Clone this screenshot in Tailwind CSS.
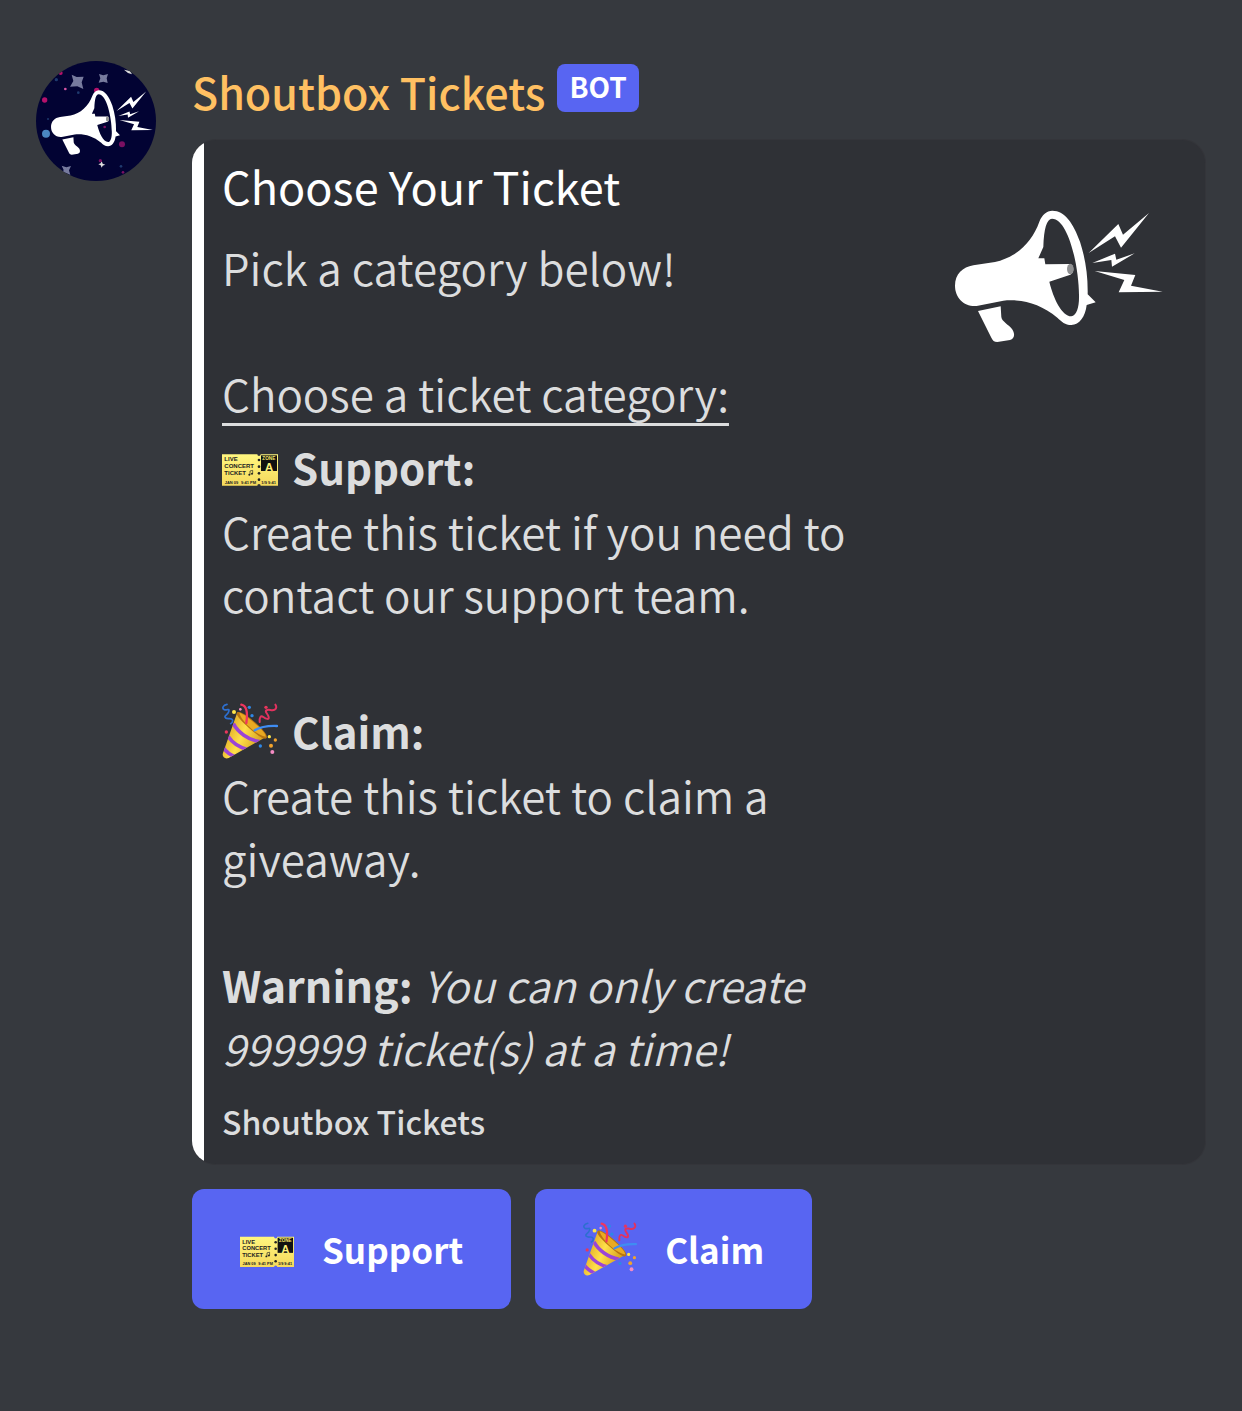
<!DOCTYPE html>
<html lang="en">
<head>
<meta charset="utf-8">
<title>Shoutbox Tickets</title>
<script src="https://cdn.jsdelivr.net/npm/@tailwindcss/browser@4"></script>
</head>
<body class="min-h-screen bg-[#36393e] font-['Noto_Sans_CJK_SC','Noto_Sans',sans-serif] text-[#dcddde]">
<svg class="absolute size-0" aria-hidden="true">
  <defs>
    <symbol id="megaphone" viewBox="0 -114 720 720">
      <path fill="#fff" fill-rule="evenodd" d="M45 272C45 238 68 216 100 211L165 201C225 188 275 145 298 80C306 60 320 47 337 47C375 47 400 85 420 140C436 190 444 240 443 298L467 322L440 330C436 365 418 390 394 390C375 390 365 380 352 368C300 325 245 312 190 317L110 333C72 336 45 308 45 272ZM336 71C320 72 312 100 310 156L295 190L313 190L316 208L390 207C403 210 403 234 391 239L328 260C340 310 365 363 394 364C410 362 418 335 417 300C416 210 385 72 336 71Z"/>
      <ellipse cx="391" cy="222" rx="10" ry="16" fill="#8f9092"/>
      <path fill="#fff" d="M114 348L182 334L184 366C186 380 205 388 216 402C226 416 224 432 210 435L172 441C162 441 158 436 154 428ZM446 174L535 87L549 119L627 54L543 158L525 124ZM457 204L525 176L529 194L584 175L516 215L514 195ZM464 228L586 240L573 272L668 290L536 292L553 255Z"/>
    </symbol>
    <linearGradient id="paper" x1="0" y1="0" x2="0" y2="1"><stop offset="0" stop-color="#fff67f"/><stop offset="1" stop-color="#f5d95c"/></linearGradient>
    <linearGradient id="gold" x1="0" y1="0.3" x2="1" y2="0.8"><stop offset="0" stop-color="#d99a1c"/><stop offset="0.45" stop-color="#ffe04a"/><stop offset="1" stop-color="#c98a10"/></linearGradient>
    <clipPath id="cone"><path d="M46 28L128 104L20 165C8 170 -1 160 3 150Z"/></clipPath>
    <symbol id="ticket" viewBox="0 -46 168 168">
      <path fill="url(#paper)" d="M0 0H106A5 5 0 0 0 116 0H168V94H116A5 5 0 0 0 106 94H0Z"/>
      <g fill="#222"><circle cx="111" cy="17" r="4"/><circle cx="111" cy="37" r="4"/><circle cx="111" cy="57" r="4"/><circle cx="111" cy="76" r="4"/></g>
      <path fill="#111" d="M117 3H165V50H117Z"/>
      <g font-family="Liberation Sans, sans-serif" font-weight="bold" fill="#222">
        <text x="7" y="21" font-size="18">LIVE</text>
        <text x="7" y="42" font-size="18">CONCERT</text>
        <text x="7" y="63" font-size="18">TICKET</text>
        <text x="8" y="88" font-size="12">JAN 09</text>
        <text x="57" y="88" font-size="12">9:41 PM</text>
        <text x="118" y="88" font-size="12">1/9 9:41</text>
        <text x="121" y="17" font-size="14" fill="#f8e86a">ZONE</text>
        <text x="129" y="49" font-size="34" fill="#fff27a">A</text>
      </g>
      <path d="M84 61V50L92 48V58" fill="none" stroke="#222" stroke-width="2"/><circle cx="82" cy="61" r="3" fill="#222"/><circle cx="90" cy="58" r="3" fill="#222"/>
    </symbol>
    <symbol id="popper" viewBox="0 0 168 168">
      <path fill="url(#gold)" d="M46 28L128 104L20 165C8 170 -1 160 3 150Z"/>
      <g clip-path="url(#cone)" fill="none" stroke="#9b45d6" stroke-width="11">
        <path d="M34 62C48 88 78 110 112 116"/><path d="M18 100C30 118 52 134 78 140"/><path d="M4 134C12 146 26 156 42 162"/>
      </g>
      <path fill="#b87410" d="M46 28C54 22 80 40 104 62C126 82 140 100 133 106C126 112 102 94 80 74C58 54 38 34 46 28Z"/>
      <path fill="#e9aa22" d="M52 29C64 32 84 48 104 66C122 82 132 94 131 101C116 98 96 86 80 70C66 56 54 40 52 29Z"/>
      <g fill="none" stroke-width="7" stroke-linecap="round">
        <path stroke="#f0355f" d="M58 5C74 8 78 26 73 60"/>
        <path stroke="#3f8df2" d="M98 82C118 70 140 68 165 69"/>
        <path stroke="#e2325f" stroke-width="6" d="M113 57C112 42 116 37 124 42C132 48 142 51 140 42C138 32 127 27 133 22C140 17 150 25 158 20C164 16 164 10 160 5"/>
        <path stroke="#2d6fd0" stroke-width="5" d="M15 4C3 6 -1 16 7 20C15 23 24 14 20 26C17 36 4 38 11 45C17 50 28 43 31 50C33 55 30 60 26 62"/>
      </g>
      <g fill="#2f87e6"><circle cx="82" cy="13" r="5"/><circle cx="90" cy="38" r="5"/><circle cx="115" cy="129" r="5"/></g>
      <g fill="#ffe648"><circle cx="36" cy="27" r="6"/><circle cx="142" cy="101" r="5"/></g>
      <g fill="#f2a32c"><circle cx="160" cy="111" r="5"/><circle cx="147" cy="128" r="6"/></g>
      <g fill="#e8365c"><circle cx="132" cy="13" r="5"/><circle cx="13" cy="87" r="5"/></g>
      <g fill="#f58cc4"><circle cx="151" cy="147" r="6"/><circle cx="55" cy="19" r="4"/></g>
    </symbol>
  </defs>
</svg>

<main class="flex items-start gap-9 px-9 py-[61px]">
  <svg class="size-[120px] shrink-0" viewBox="30 32 360 360" role="img" aria-label="Shoutbox Tickets avatar">
    <clipPath id="disc"><circle cx="210" cy="212" r="180"/></clipPath>
    <g clip-path="url(#disc)">
      <path fill="#020333" d="M30 32H390V392H30Z"/>
      <g fill="#777b9e"><path d="M137 73L152 80L173 79L167 96L172 116L154 108L132 109L142 92Z"/><path d="M219 71L232 75L246 71L242 84L245 98L232 94L218 97L223 84Z"/><path d="M107 346L121 351L135 347L129 360L133 374L120 368L107 372L113 359Z"/></g>
      <path fill="#ddd" d="M227 332L230 340L238 343L230 346L227 352L224 345L217 342L224 339ZM294 58L312 62L318 72L306 68Z"/>
      <g fill="#b5116b"><circle cx="56" cy="149" r="8"/><circle cx="212" cy="120" r="8"/><circle cx="104" cy="68" r="6"/></g>
      <g fill="#7a1062"><circle cx="288" cy="282" r="9"/><circle cx="236" cy="230" r="4"/><circle cx="223" cy="331" r="5"/><circle cx="291" cy="366" r="4"/></g>
      <circle cx="118" cy="116" r="4" fill="#d756a5"/><circle cx="60" cy="250" r="12" fill="#4a86c2"/>
      <g fill="#1e3a6e"><circle cx="91" cy="88" r="5"/><circle cx="157" cy="127" r="4"/><circle cx="285" cy="348" r="4"/><circle cx="66" cy="206" r="3"/></g>
      <use href="#megaphone" x="53" y="41" width="353" height="353"/>
    </g>
  </svg>

  <div class="min-w-0 flex-1">
    <header class="flex h-[78px] items-start gap-3">
      <h1 class="text-[43px] leading-[60px] font-medium text-[#ffc062]">Shoutbox Tickets</h1>
      <span class="mt-[3px] rounded-lg bg-[#5865f2] px-3 pb-1 text-[28px] leading-[44px] font-bold text-white">BOT</span>
    </header>

    <article class="flex overflow-hidden rounded-3xl border border-l-0 border-[#34353a] bg-[#2f3136]">
      <div class="w-3 shrink-0 bg-white"></div>
      <div class="flex min-w-0 flex-1 gap-6 pt-[17px] pr-[25px] pb-[19px] pl-[18px]">
        <div class="min-w-0 flex-1">
          <h2 class="mb-[21px] text-[45px] leading-[58px] font-normal text-white">Choose Your Ticket</h2>
          <div class="text-[44px] leading-[63px] font-[350]">
            <p>Pick a category below!</p>
            <p class="mt-[63px] underline decoration-3 underline-offset-[11px] [text-decoration-skip-ink:none]">Choose a ticket category:</p>
            <h3 class="flex items-center gap-3.5 pt-2.5 pb-0.5 text-[42px] font-bold"><svg class="size-14"><use href="#ticket"/></svg>Support:</h3>
            <p>Create this ticket if you need to contact our support team.</p>
            <h3 class="mt-[63px] flex items-center gap-3.5 pt-2.5 pb-0.5 text-[42px] font-bold"><svg class="size-14"><use href="#popper"/></svg>Claim:</h3>
            <p>Create this ticket to claim a giveaway.</p>
            <p class="mt-[63px]"><strong class="text-[43px] font-bold">Warning:</strong> <em class="text-[43px]">You can only create 999999 ticket(s) at a time!</em></p>
          </div>
          <p class="mt-[18px] text-[32px] leading-[48px] font-medium">Shoutbox Tickets</p>
        </div>
        <svg class="size-60 shrink-0" role="img" aria-label="Megaphone"><use href="#megaphone"/></svg>
      </div>
    </article>

    <div class="mt-6 flex gap-6">
      <button class="flex h-[120px] items-center gap-7 rounded-xl bg-[#5865f2] px-12 text-[35px] font-bold text-white"><svg class="size-[54px]"><use href="#ticket"/></svg>Support</button>
      <button class="flex h-[120px] items-center gap-7 rounded-xl bg-[#5865f2] px-12 text-[35px] font-bold text-white"><svg class="size-[54px]"><use href="#popper"/></svg>Claim</button>
    </div>
  </div>
</main>
</body>
</html>
